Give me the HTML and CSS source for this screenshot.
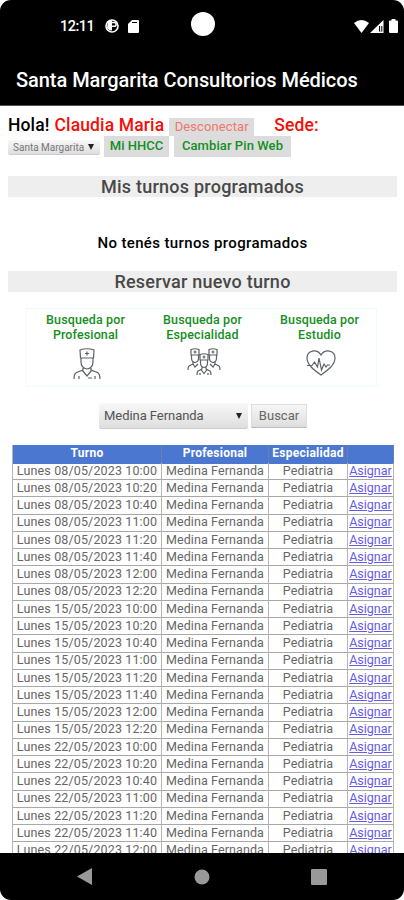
FILE: index.html
```
<!DOCTYPE html>
<html lang="es">
<head>
<meta charset="utf-8">
<title>Santa Margarita Consultorios Médicos</title>
<link rel="stylesheet" href="styles.css">
</head>
<body>
<div class="phone">
<header class="top">
  <div class="status">
    <span class="clock">12:11</span>
    <svg class="st-app" width="14" height="14" viewBox="0 0 14 14"><circle cx="7" cy="7" r="6" fill="none" stroke="#fff" stroke-width="1.6"/><path d="M3 2h4v9.500H4.500L2 9z" fill="#fff"/><path d="M7 3.500h2.200a1.900 1.900 0 0 1 0 3.800H7" stroke="#fff" stroke-width="1.500" fill="none"/></svg>
    <svg class="st-sd" width="11" height="13" viewBox="0 0 11 13"><path d="M4 0h6q1 0 1 1v11q0 1-1 1H1q-1 0-1-1V4z" fill="#fff"/><path d="M4 2.500h5" stroke="#000" stroke-width="1"/></svg>
    <span class="camera"></span>
    <svg class="st-wifi" width="15" height="13" viewBox="0 0 15 13"><path d="M0 3Q7.500-3 15 3L7.500 13z" fill="#fff"/></svg>
    <svg class="st-cell" width="14" height="13" viewBox="0 0 14 13"><path d="M0 13L13.500 0v13z" fill="#fff"/><path d="M9 6h3.300v5.500H9z" fill="#000"/><path d="M10.700 5v6.500" stroke="#fff" stroke-width="1.200"/></svg>
    <svg class="st-bat" width="9" height="14" viewBox="0 0 9 14"><path d="M2.500 0h4v1.500H8q1 0 1 1V13q0 1-1 1H1q-1 0-1-1V2.500q0-1 1-1h1.500z" fill="#fff"/></svg>
  </div>
  <h1>Santa Margarita Consultorios Médicos</h1>
</header>
<main>
  <div class="hello"><b>Hola!</b><b class="red user">Claudia Maria</b><a class="out">Desconectar</a><b class="red sede">Sede:</b></div>
  <div class="tools"><span class="sel small"><span>Santa Margarita</span><i></i></span><a class="tool hc">Mi HHCC</a><a class="tool pin">Cambiar Pin Web</a></div>
  <h2>Mis turnos programados</h2>
  <p class="none">No tenés turnos programados</p>
  <h2>Reservar nuevo turno</h2>
  <section class="search">
    <a>Busqueda por<br>Profesional
      <svg width="28" height="32" viewBox="0 0 28 32"><path d="M7 2Q14-.500 21 2L20.500 10h-13zM8 10v4q0 6 6 7 6-1 6-7v-4M10 20v2L3.500 24.500Q1 26 1 31M18 20v2l6.500 2.500Q27 26 27 31M9.500 22.500L14 28l4.500-5.500M6 31v-3M22 31v-3M15 30h4M14 3.500v4M12 5.500h4"/></svg></a>
    <a>Busqueda por<br>Especialidad
      <svg width="34" height="28" viewBox="0 0 34 28"><path d="M4 1.500Q8 0 12 1.500V7H4zM4.500 7v3q0 4 3.500 4.500Q11.500 14 11.500 10V7M22 1.500Q26 0 30 1.500V7h-8zM22.500 7v3q0 4 3.500 4.500 3.500-.5 3.500-4.500V7M6 14v2l-4 2q-1 1-1 4M6 16l2 3 3-3M28 14v2l4 2q1 1 1 4M28 16l-2 3-3-3M13 6.500Q17 5 21 6.500V12h-8zM13.500 12v3q0 4 3.500 4.500 3.500-.5 3.500-4.500v-3M15 19v2l-4 2q-1 1-1 4M19 19v2l4 2q1 1 1 4M14 21.500l3 4 3-4M8 2.500v3M6.500 4h3M26 2.500v3M24.500 4h3M17 7.500v3M15.500 9h3M13 27v-2M21 27v-2"/></svg></a>
    <a>Busqueda por<br>Estudio
      <svg class="heart" width="30" height="26" viewBox="0 0 30 26"><path d="M15 25C8 20 1 15 1 8 1 0 11-1.500 15 5 19-1.500 29 0 29 8c0 7-7 12-14 17zM1 15.500h5L8.500 12l3 5L13 8l2.500 12 2.500-6 2 3 1.500-2H24"/></svg></a>
  </section>
  <div class="form"><span class="sel big"><span>Medina Fernanda</span><i></i></span><span class="btn">Buscar</span></div>
  <div class="table" id="turnos">
    <div class="row head"><span>Turno</span><span>Profesional</span><span>Especialidad</span><span></span></div>
  </div>
</main>
<nav><svg width="15" height="17" viewBox="0 0 15 17"><path d="M0 8.500L15 0v17z"/></svg><svg width="16" height="16" viewBox="0 0 16 16"><circle cx="8" cy="8" r="7.500"/></svg><svg width="16" height="16" viewBox="0 0 16 16"><rect width="16" height="16" rx="1"/></svg></nav>
</div>
<script src="turnos.js"></script>
</body>
</html>
```
FILE: styles.css
```
* { box-sizing: border-box; }
body { margin: 0; background: #fff; font-family: Roboto, "Liberation Sans", sans-serif; }
.phone { width: 404px; height: 900px; overflow: hidden; display: flex; flex-direction: column; background: #fff; }
.top { flex: none; height: 106px; background: #000; color: #fff; border-radius: 11px 11px 0 0; border-bottom: 1px solid #555; }
.status { height: 52px; display: flex; align-items: center; padding-left: 60px; }
.clock { font-size: 14.5px; font-weight: 500; width: 45px; letter-spacing: -.5px; }
.st-sd { margin-left: 9px; }
.camera { width: 24px; height: 24px; border-radius: 50%; background: #fff; margin: -4px 0 0 52px; }
.st-wifi { margin-left: 139px; }
.st-cell { margin-left: 1px; }
.st-bat { margin-left: 5px; }
h1 { margin: 0; padding-left: 16px; font-size: 20px; letter-spacing: -.05px; line-height: 56px; font-weight: 500; white-space: nowrap; }
main { flex: none; height: 747px; overflow: hidden; padding: 9px 7px 0 8px; white-space: nowrap; }
.hello { height: 21px; display: flex; font-size: 17.5px; line-height: 21px; }
.hello b { font-weight: 500; letter-spacing: .13px; }
.red { color: #f60d08; }
.user { margin-left: 5px; }
.out { width: 85px; height: 18px; margin: 3px 0 0 5px; background: #ddd; color: #f0776c; text-align: center; font-size: 13px; letter-spacing: .1px; line-height: 18px; }
.sede { margin-left: 20px; }
.tools { display: flex; height: 21px; }
.sel { display: flex; align-items: center; justify-content: space-between; background: linear-gradient(#f8f8f8, #dedede); border-bottom: 1px solid #ccc; border-radius: 2px; color: #555; }
.sel i { border: solid transparent; border-top-color: #222; border-width: 6px 3px 0; }
.small { width: 92px; height: 15px; margin: 4px 4px 0 0; padding: 0 6px 0 5px; font-size: 10px; color: #777; }
.tool { height: 21px; background: #dcdcdc; color: #129023; font-size: 13px; font-weight: 500; line-height: 20px; text-align: center; }
.hc { width: 65px; }
.pin { width: 117px; margin-left: 5px; letter-spacing: .08px; }
h2 { margin: 19px 0 0; height: 21px; background: #eee; color: #484848; font-size: 18px; letter-spacing: .24px; line-height: 22px; font-weight: 500; text-align: center; }
.none { margin: 36px 0 17px; height: 21px; font-size: 15px; letter-spacing: .37px; line-height: 21px; font-weight: 500; text-align: center; }
.none + h2 { margin-top: 0; }
.search { display: grid; grid-template-columns: repeat(3, 117px); margin: 16px 20px 0 18px; height: 79px; border: 1px solid #effcfc; padding-top: 3px; }
.search a { display: flex; flex-direction: column; align-items: center; text-align: center; color: #168e22; font-size: 12.5px; letter-spacing: .12px; line-height: 15px; font-weight: 500; }
.search svg { margin: 6px 0 0 2px; fill: none; stroke: #5c6267; stroke-width: 1.2; }
.search .heart { margin-top: 8px; }
.form { display: flex; margin: 16px 0 0 91px; }
.big { width: 149px; height: 26px; padding: 0 6px 0 5px; font-size: 13px; letter-spacing: -.05px; }
.btn { width: 56px; height: 24px; margin: 1px 0 0 3px; border: 1px solid #ddd; border-bottom-color: #bbb; background: linear-gradient(#f6f6f6, #dedede); font-size: 13px; line-height: 22px; text-align: center; color: #666; }
.table { width: 382px; margin: 16px 0 0 4px; border-left: 1px solid #b5b5b5; }
.row { display: grid; grid-template-columns: 149px 107px 79px 46px; height: 17.25px; font-size: 12.5px; line-height: 16.5px; color: #666; text-align: center; }
.row > * { border-right: 1px solid #b5b5b5; border-bottom: 1px solid #a8a8a8; }
.when { letter-spacing: .14px; }
.who, .what { letter-spacing: .1px; }
.head { height: 17.5px; background: #4b77d1; color: #fff; font-weight: 700; font-size: 12px; letter-spacing: .25px; line-height: 17.5px; }
.head > * { border-bottom-color: #4b77d1; border-right-color: #6780b0; }
.row a { color: #655bea; text-decoration: underline; }
nav { flex: none; height: 47px; background: #000; border-radius: 0 0 11px 11px; display: flex; align-items: center; justify-content: space-between; padding: 0 77px; }
nav svg { fill: #999; }
```
FILE: turnos.js
```
const days = ["08/05/2023", "15/05/2023", "22/05/2023"];
const hours = ["10:00", "10:20", "10:40", "11:00", "11:20", "11:40", "12:00", "12:20"];
const table = document.getElementById("turnos");
for (const day of days) {
  for (const hour of hours) {
    if (day === days[2] && hour === "12:20") continue;
    table.insertAdjacentHTML("beforeend",
      `<div class="row"><span class="when">Lunes ${day} ${hour}</span><span class="who">Medina Fernanda</span><span class="what">Pediatria</span><a>Asignar</a></div>`);
  }
}
```
